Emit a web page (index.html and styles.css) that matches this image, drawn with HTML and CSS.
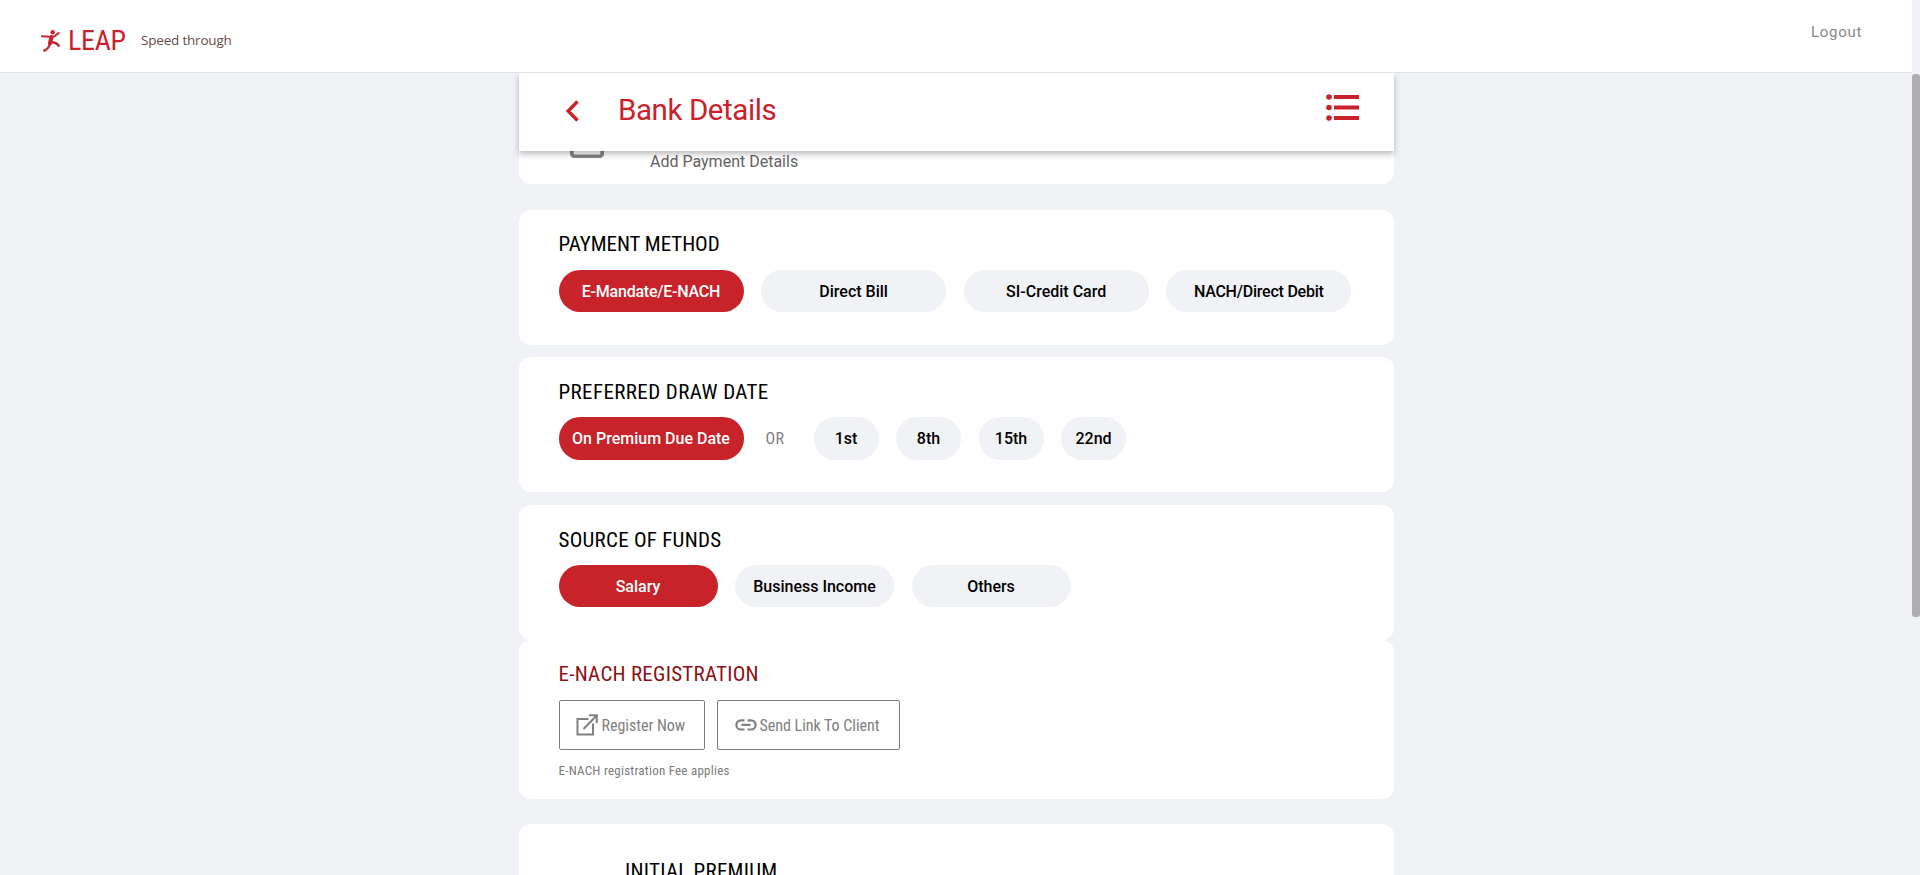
FILE: index.html
```html
<!DOCTYPE html>
<html lang="en">
<head>
<meta charset="utf-8">
<title>Bank Details</title>
<link rel="stylesheet" href="styles.css">
</head>
<body>
<div class="page">
  <header class="topbar">
    <div class="brand">
      <svg class="brand-mark" width="20" height="24" viewBox="0 0 20 24" fill="none" stroke="#c9222b" stroke-linecap="round" stroke-linejoin="round">
        <circle cx="11.700" cy="3.200" r="2.200" fill="#c9222b" stroke="none"/>
        <path d="M1 7.300l8 .4 4-.2 4.800-3.500" stroke-width="2.100"/>
        <path d="M10.500 8l-1.600 6.500" stroke-width="4"/>
        <path d="M9 14.500c-1 3.500-2.500 6-5.800 7.200" stroke-width="2.300"/>
        <path d="M9.500 13c3 .2 6.500 1 8.300 3.800" stroke-width="2.300"/>
      </svg>
      <span class="brand-name">LEAP</span>
      <span class="brand-tag">Speed through</span>
    </div>
    <a class="logout">Logout</a>
  </header>

  <main class="content">
    <div class="titlebar">
      <svg class="back" width="14" height="22" viewBox="0 0 14 22" fill="none" stroke="#c9222b" stroke-width="3.400"><path d="M12.500 1.500L3.200 11l9.300 9.500"/></svg>
      <h1 class="title">Bank Details</h1>
      <svg class="list" width="34" height="28" viewBox="0 0 34 28" fill="#c9222b">
        <circle cx="3" cy="3" r="2.800"/><circle cx="3" cy="13.500" r="2.800"/><circle cx="3" cy="24" r="2.800"/>
        <path d="M8 1.100h25v3.800H8zM8 11.600h25v3.800H8zM8 22.100h25v3.800H8z"/>
      </svg>
    </div>

    <section class="card card-summary">
      <svg class="card-icon" width="34" height="26" viewBox="0 0 34 26" fill="none" stroke="#858585" stroke-width="3.600"><rect x="1.800" y="1.800" width="30.400" height="22.400" rx="2.500"/></svg>
      <span class="summary-text">Add Payment Details</span>
    </section>

    <section class="card card-method">
      <h2 class="heading">PAYMENT METHOD</h2>
      <div class="pills pills-method">
        <span class="pill active tight">E-Mandate/E-NACH</span>
        <span class="pill">Direct Bill</span>
        <span class="pill">SI-Credit Card</span>
        <span class="pill tight">NACH/Direct Debit</span>
      </div>
    </section>

    <section class="card card-date">
      <h2 class="heading spaced">PREFERRED DRAW DATE</h2>
      <div class="pills pills-date">
        <span class="pill active">On Premium Due Date</span>
        <span class="or">OR</span>
        <span class="pill day">1st</span>
        <span class="pill day">8th</span>
        <span class="pill day">15th</span>
        <span class="pill day">22nd</span>
      </div>
    </section>

    <section class="card card-funds">
      <h2 class="heading loose">SOURCE OF FUNDS</h2>
      <div class="pills pills-funds">
        <span class="pill active">Salary</span>
        <span class="pill">Business Income</span>
        <span class="pill">Others</span>
      </div>
    </section>

    <section class="card card-register">
      <h2 class="heading loose dark-red">E-NACH REGISTRATION</h2>
      <div class="actions">
        <button class="action action-register">
          <svg width="22" height="22" viewBox="0 0 22 22" fill="none" stroke="#808080" stroke-width="2"><path d="M12.500 5H1.500v15.500H17V9.500M7.500 15L20 2.200M13 1.300h7.800V9"/></svg>
          <span>Register Now</span>
        </button>
        <button class="action action-link">
          <svg width="22" height="12" viewBox="0 0 22 12" fill="none" stroke="#808080" stroke-width="2.200"><path d="M9.500 1.300H6a4.600 4.600 0 0 0 0 9.200h3.500M12.500 1.300H16a4.600 4.600 0 0 1 0 9.200h-3.500M6.500 5.900h9"/></svg>
          <span>Send Link To Client</span>
        </button>
      </div>
      <p class="note">E-NACH registration Fee applies</p>
    </section>

    <section class="card card-premium">
      <h2 class="heading loose">INITIAL PREMIUM</h2>
    </section>
  </main>
  <div class="scrollbar"><div class="thumb"></div></div>
</div>
</body>
</html>
```
FILE: styles.css
```css
* { box-sizing: border-box; }
body { margin: 0; background: #f1f2f6; font-family: "Roboto Condensed", Roboto, sans-serif; font-stretch: 75%; }
.page { position: relative; height: 875px; overflow: hidden; padding-right: 8px; }

.topbar { display: flex; justify-content: space-between; height: 73px; background: #fff; border-bottom: 1px solid #dfe2e7; }
.brand { display: flex; align-items: flex-start; padding: 24px 0 0 41px; }
.brand-mark { margin-top: 5px; }
.brand-name { margin-left: 7px; font-size: 28px; line-height: 33px; color: #c9222b; width: 73px; letter-spacing: -0.300px; }
.brand-tag { font: 13.500px/18px "Open Sans", sans-serif; color: #6e4a48; margin-top: 7px; letter-spacing: -0.200px; white-space: nowrap; }
.logout { font: 15px/20px Roboto, sans-serif; color: #888; letter-spacing: 0.700px; margin: 22px 50px 0 0; }

.content { width: 875px; margin-left: 519px; display: flex; flex-direction: column; }
.titlebar { position: relative; z-index: 1; display: flex; align-items: flex-start; height: 78px; flex: none; background: #fff; padding: 0 34px 0 46px; box-shadow: 0 3px 6px rgba(0,0,0,.27); clip-path: inset(0 -10px -12px -10px); }
.back { margin-top: 26.500px; }
.title { margin: 19px 0 0 39px; font: 400 29.500px/36px Roboto, sans-serif; color: #c9222b; letter-spacing: -0.420px; }
.list { margin: 21px 0 0 auto; }

.card { background: #fff; border-radius: 12px; padding-left: 39.500px; flex: none; }
.card-summary { height: 44px; margin-top: -11px; display: flex; border-radius: 0 0 12px 12px; padding-left: 51px; }
.card-icon { margin-top: -8.500px; }
.summary-text { margin: 12px 0 0 46px; font: 16px/20px Roboto, sans-serif; color: #626262; }
.card-method { height: 135px; margin-top: 25.500px; padding-top: 21px; }
.card-date { height: 135px; margin-top: 12.500px; padding-top: 21.500px; }
.card-funds { height: 135px; margin-top: 13px; padding-top: 21.500px; }
.card-register { height: 158.500px; padding-top: 21px; }
.card-premium { height: 120px; margin-top: 25.500px; padding: 33.500px 0 0 106px; }

.heading { margin: 0; font-size: 21px; line-height: 26px; font-weight: 400; color: #000; letter-spacing: -0.050px; }
.loose { letter-spacing: 0.260px; }
.spaced { letter-spacing: 0.400px; }
.dark-red { color: #8f1014; }

.pills { display: flex; margin-top: 12px; }
.pills-method { margin-top: 13px; }
.pill { display: flex; align-items: center; justify-content: center; height: 42px; padding-top: 2px; border-radius: 21px; background: #f1f2f6; color: #000; font: 500 16px/20px Roboto, sans-serif; white-space: nowrap; }
.pill.active { background: #c8222a; color: #fff; }
.pill.tight { letter-spacing: -0.230px; }
.pills-method { gap: 17.600px; }
.pills-method .pill { width: 185px; }
.pills-date .pill { height: 43px; }
.pills-date .active { width: 185px; }
.or { width: 19px; margin: 12px 29px 0 22px; font-size: 16px; line-height: 20px; color: #808080; letter-spacing: 0.500px; }
.pills-date .day { width: 65px; margin-right: 17.500px; }
.pills-funds { gap: 17.500px; }
.pills-funds .pill { width: 159px; }

.actions { display: flex; gap: 12px; margin-top: 13px; }
.action { display: flex; align-items: center; height: 50px; padding: 0 0 0 16px; border: 1px solid #7d7d7d; border-radius: 2px; background: #fff; color: #808080; font-family: inherit; font-stretch: 75%; font-size: 16px; letter-spacing: -0.020px; white-space: nowrap; }
.action-register { width: 146px; gap: 4px; }
.action-link { width: 183px; gap: 3px; padding-left: 17px; }
.note { margin: 12px 0 0; font-size: 13px; line-height: 18px; letter-spacing: 0.240px; color: #7a7a7a; }

.scrollbar { position: absolute; top: 0; right: 0; width: 8px; height: 875px; background: #f1f2f6; padding-top: 74px; }
.thumb { height: 543px; border-radius: 3px; background: #adadb1; }
```
